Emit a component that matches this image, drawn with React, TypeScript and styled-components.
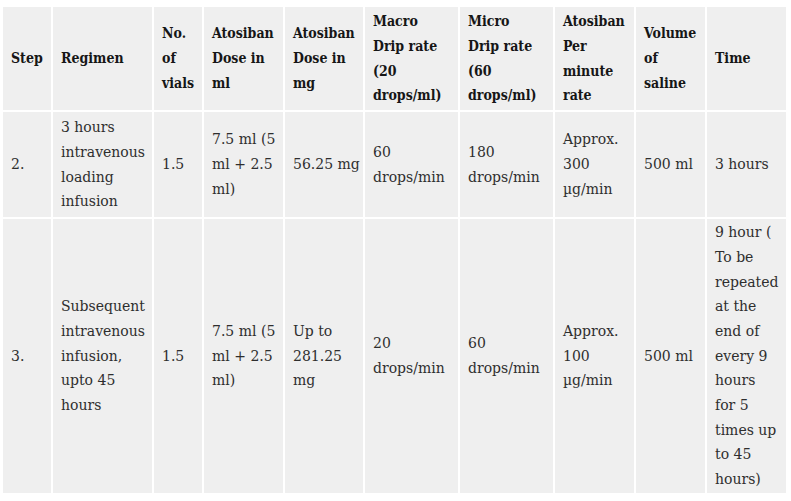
import React from "react";
import styled, { createGlobalStyle } from "styled-components";

const Global = createGlobalStyle`
  html, body { margin: 0; padding: 0; background: #ffffff; }
  body { font-family: "DejaVu Serif", serif; }
`;

const Wrap = styled.div`
  padding: 5px 0 0 1px;
`;

const Table = styled.table`
  border-collapse: collapse;
  table-layout: fixed;
  width: 787px;
  background: #efefef;
  font-family: "DejaVu Serif", serif;
  font-size: 14px;
  line-height: 24.7px;
`;

const HeadCell = styled.th`
  border: 2px solid #ffffff;
  padding: 0 6px 0 8px;
  text-align: left;
  vertical-align: middle;
  font-family: "DejaVu Serif Condensed", "DejaVu Serif", serif;
  font-weight: 700;
  color: #161616;
  white-space: nowrap;
`;

const Cell = styled.td`
  border: 2px solid #ffffff;
  padding: 0 6px 0 8px;
  vertical-align: middle;
  color: #2e2e2e;
  white-space: nowrap;
`;

const Row = styled.tr<{ $h: number }>`
  height: ${(p) => p.$h}px;
`;

const widths = [50, 101, 50, 81, 80, 95, 95, 81, 71, 81];

const headers: string[][] = [
  ["Step"],
  ["Regimen"],
  ["No.", "of", "vials"],
  ["Atosiban", "Dose in", "ml"],
  ["Atosiban", "Dose in", "mg"],
  ["Macro", "Drip rate", "(20", "drops/ml)"],
  ["Micro", "Drip rate", "(60", "drops/ml)"],
  ["Atosiban", "Per", "minute", "rate"],
  ["Volume", "of", "saline"],
  ["Time"],
];

const rows: { h: number; cells: string[][] }[] = [
  {
    h: 107,
    cells: [
      ["2."],
      ["3 hours", "intravenous", "loading", "infusion"],
      ["1.5"],
      ["7.5 ml (5", "ml + 2.5", "ml)"],
      ["56.25 mg"],
      ["60", "drops/min"],
      ["180", "drops/min"],
      ["Approx.", "300", "\u00b5g/min"],
      ["500 ml"],
      ["3 hours"],
    ],
  },
  {
    h: 276,
    cells: [
      ["3."],
      ["Subsequent", "intravenous", "infusion,", "upto 45", "hours"],
      ["1.5"],
      ["7.5 ml (5", "ml + 2.5", "ml)"],
      ["Up to", "281.25", "mg"],
      ["20", "drops/min"],
      ["60", "drops/min"],
      ["Approx.", "100", "\u00b5g/min"],
      ["500 ml"],
      [
        "9 hour (",
        "To be",
        "repeated",
        "at the",
        "end of",
        "every 9",
        "hours",
        "for 5",
        "times up",
        "to 45",
        "hours)",
      ],
    ],
  },
];

const Lines: React.FC<{ lines: string[] }> = ({ lines }) => (
  <>
    {lines.map((l, i) => (
      <React.Fragment key={i}>
        {i > 0 && <br />}
        {l}
      </React.Fragment>
    ))}
  </>
);

export default function App() {
  return (
    <>
      <Global />
      <Wrap>
        <Table>
          <colgroup>
            {widths.map((w, i) => (
              <col key={i} style={{ width: w }} />
            ))}
          </colgroup>
          <thead>
            <Row $h={105}>
              {headers.map((h, i) => (
                <HeadCell key={i}>
                  <Lines lines={h} />
                </HeadCell>
              ))}
            </Row>
          </thead>
          <tbody>
            {rows.map((r, ri) => (
              <Row key={ri} $h={r.h}>
                {r.cells.map((c, ci) => (
                  <Cell key={ci}>
                    <Lines lines={c} />
                  </Cell>
                ))}
              </Row>
            ))}
          </tbody>
        </Table>
      </Wrap>
    </>
  );
}
